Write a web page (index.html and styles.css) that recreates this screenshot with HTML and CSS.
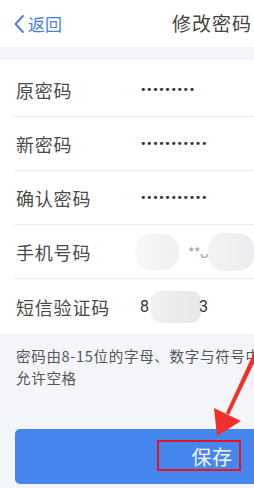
FILE: index.html
```html
<!DOCTYPE html>
<html lang="zh">
<head>
<meta charset="utf-8">
<link rel="stylesheet" href="styles.css">
</head>
<body>
<div class="screen">
  <header class="nav">
    <div class="back">
      <svg class="chev" width="12" height="20" viewBox="0 0 12 20"><path d="M10 2 L2.5 10 L10 18" fill="none" stroke="#4a7fe1" stroke-width="2" stroke-linecap="round" stroke-linejoin="round"/></svg>
      <span>返回</span>
    </div>
    <div class="title">修改密码</div>
  </header>
  <div class="gap"></div>
  <div class="list">
    <div class="row"><span class="label">原密码</span><span class="dots">•••••••••</span></div>
    <div class="row"><span class="label">新密码</span><span class="dots">•••••••••••</span></div>
    <div class="row"><span class="label">确认密码</span><span class="dots">•••••••••••</span></div>
    <div class="row"><span class="label">手机号码</span><span class="val phone"><span class="blob b1"></span><span class="stars">**ᴗ_</span><span class="blob b2"></span></span></div>
    <div class="row last"><span class="label">短信验证码</span><span class="val sms"><span class="dig">8</span><span class="blob b3"></span><span class="dig">3</span></span></div>
  </div>
  <div class="hint">密码由8-15位的字母、数字与符号中至少两种组成，不<br>允许空格</div>
  <div class="btnwrap">
    <div class="btn"><span class="btntext">保存</span><span class="mark"></span></div>
  </div>
  <svg class="arrow" width="60" height="100" viewBox="200 350 60 100">
    <path d="M258 355 L254 352 L226 413 L229 415 Z" fill="#f2302b"/>
    <path d="M217 436 L214 408 L241 421 Z" fill="#f2302b"/>
  </svg>
</div>
</body>
</html>
```
FILE: styles.css
```css
html, body {
  margin: 0;
  padding: 0;
  background: #f4f5f8;
}
body {
  width: 254px;
  height: 488px;
  overflow: hidden;
  font-family: "Noto Sans CJK SC", "Noto Sans", sans-serif;
}
.screen {
  position: relative;
  width: 424px;
  height: 488px;
  background: #f4f5f8;
}
.nav {
  height: 47px;
  background: #fff;
  position: relative;
  display: flex;
  align-items: center;
}
.back {
  display: flex;
  align-items: center;
  padding-left: 13px;
  color: #4a7fe1;
  font-size: 17px;
  gap: 3px;
}
.back span {
  line-height: 20px;
}
.title {
  position: absolute;
  left: 0;
  right: 0;
  top: 0;
  height: 47px;
  line-height: 45px;
  text-align: center;
  font-size: 19px;
  color: #444;
  letter-spacing: 1px;
  pointer-events: none;
}
.gap {
  height: 13px;
}
.list {
  background: #fff;
  padding-top: 3px;
}
.row {
  height: 53px;
  margin-left: 14px;
  border-bottom: 1px solid #ececee;
  display: flex;
  align-items: center;
}
.row.last {
  border-bottom: none;
  height: 55px;
}
.label {
  width: 124px;
  padding-left: 2px;
  font-size: 18px;
  color: #4a4a4a;
  letter-spacing: 0.8px;
}
.dots {
  font-family: "DejaVu Sans", sans-serif;
  font-size: 11px;
  color: #333;
  letter-spacing: -0.4px;
}
.val {
  display: flex;
  align-items: center;
  position: relative;
}
.phone {
  margin-left: -5px;
}
.blob {
  display: block;
  border-radius: 16px;
}
.b1 {
  width: 44px;
  height: 36px;
  background: linear-gradient(90deg, #f8f8f9, #eeeff1);
}
.stars {
  font-size: 14px;
  color: #a0a1a5;
  width: 28px;
  margin-left: 9px;
  white-space: nowrap;
  letter-spacing: -0.5px;
}
.b2 {
  width: 46px;
  height: 38px;
  margin-left: -8px;
  background: linear-gradient(90deg, #f4f4f6, #ebecef);
}
.sms {
  color: #333;
  font-size: 16px;
}
.dig {
  font-family: "Roboto", sans-serif;
}
.b3 {
  width: 50px;
  height: 32px;
  margin: 0 -2px 0 2px;
  border-radius: 10px;
  background: linear-gradient(90deg, #f1f1f3, #e6e7ea);
}
.hint {
  padding: 11px 16px 0;
  font-size: 14.5px;
  line-height: 22px;
  color: #555;
  letter-spacing: 0.7px;
  white-space: nowrap;
  height: 84px;
}
.btnwrap {
  padding: 0 15px;
}
.btn {
  position: relative;
  height: 55px;
  border-radius: 5px;
  background: #4686ef;
  display: flex;
  align-items: center;
  justify-content: center;
}
.btntext {
  color: #f4f6fb;
  font-size: 20px;
  letter-spacing: 0.5px;
}
.mark {
  position: absolute;
  left: 142px;
  top: 11px;
  width: 80px;
  height: 27px;
  border: 2px solid #e8141c;
}
.arrow {
  position: absolute;
  left: 200px;
  top: 350px;
}
```
